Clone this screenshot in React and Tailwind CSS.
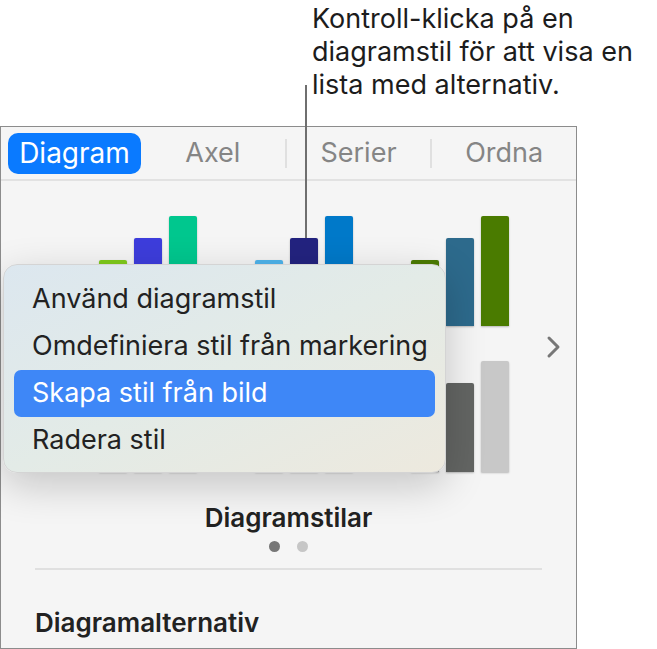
import React from 'react';

const rowOne = [
  [{ h: 66, c: 'bg-[#7fcb1c]' }, { h: 88, c: 'bg-[#3d3ddc]' }, { h: 110, c: 'bg-[#00c78e]' }],
  [{ h: 66, c: 'bg-[#4eb4ec]' }, { h: 88, c: 'bg-[#23237f]' }, { h: 110, c: 'bg-[#0079c9]' }],
  [{ h: 66, c: 'bg-[#4b7b02]' }, { h: 88, c: 'bg-[#2d6a8c]' }, { h: 110, c: 'bg-[#4a7b00]' }],
];

const rowTwo = [
  [{ h: 67, c: 'bg-[#e0b84a]' }, { h: 89, c: 'bg-[#d9784a]' }, { h: 111, c: 'bg-[#c24a4a]' }],
  [{ h: 67, c: 'bg-[#8ab4d8]' }, { h: 89, c: 'bg-[#5a86b8]' }, { h: 111, c: 'bg-[#355e90]' }],
  [{ h: 67, c: 'bg-[#9a9a9a]' }, { h: 89, c: 'bg-[#636563]' }, { h: 111, c: 'bg-[#c8c8c8]' }],
];

const menuItems = ['Använd diagramstil', 'Omdefiniera stil från markering', 'Skapa stil från bild', 'Radera stil'];

const BarRow = ({ groups, height }) => (
  <div className="flex items-end gap-[58px] pl-[98px]" style={{ height }}>
    {groups.map((group, i) => (
      <div key={i} className="flex items-end gap-[7px]">
        {group.map((bar, j) => (
          <div
            key={j}
            className={`w-[28px] rounded-t-[2px] shadow-[0_1px_2px_rgba(0,0,0,0.25)] ${bar.c}`}
            style={{ height: bar.h }}
          />
        ))}
      </div>
    ))}
  </div>
);

export default function App() {
  return (
    <div className="relative w-[657px] h-[649px] bg-white font-['Inter',sans-serif] overflow-hidden">
      {/* callout */}
      <div className="h-[126px] pl-[312px] pt-[2px] text-[27px] leading-[33px] text-[#1c1c1c]">
        Kontroll-klicka på en
        <br />
        diagramstil för att visa en
        <br />
        lista med alternativ.
      </div>

      {/* inspector panel */}
      <div className="w-[577px] h-[523px] border border-[#8c8c8c] bg-[#f5f5f5]">
        <div className="h-[54px] flex items-center pl-[7px] border-b-2 border-[#e2e2e2]">
          <div className="w-[133px] h-[41px] rounded-[10px] bg-[#0a7aff] text-white text-[28px] flex items-center justify-center">
            Diagram
          </div>
          <div className="flex-1 text-center text-[27px] text-[#858585]">Axel</div>
          <div className="w-[2px] h-[29px] bg-[#e0e0e0]" />
          <div className="flex-1 text-center text-[27px] text-[#858585]">Serier</div>
          <div className="w-[2px] h-[29px] bg-[#e0e0e0]" />
          <div className="flex-1 text-center text-[27px] text-[#858585]">Ordna</div>
        </div>

        <div className="flex items-center mt-[35px]">
          <div className="flex flex-col gap-[35px] w-[509px]">
            <BarRow groups={rowOne} height={110} />
            <BarRow groups={rowTwo} height={111} />
          </div>
          <svg className="ml-[36px] mt-[6px]" width="16" height="24" viewBox="0 0 16 24" fill="none">
            <path d="M3 3l9 9-9 9" stroke="#777" strokeWidth="3" strokeLinecap="round" strokeLinejoin="round" />
          </svg>
        </div>

        <div className="mt-[31px] text-center text-[26px] leading-[30px] font-semibold text-[#222]">Diagramstilar</div>
        <div className="flex justify-center gap-[17px] mt-[8px]">
          <div className="w-[11px] h-[11px] rounded-full bg-[#777]" />
          <div className="w-[11px] h-[11px] rounded-full bg-[#c6c6c6]" />
        </div>
        <div className="mx-[34px] mt-[16px] h-[2px] bg-[#e0e0e0]" />
        <div className="mt-[38px] pl-[34px] text-[26px] leading-[30px] font-semibold text-[#222]">Diagramalternativ</div>
      </div>

      {/* leader line */}
      <div className="absolute left-[305px] top-[85px] w-[2px] h-[153px] bg-[#6f6f6f]" />

      {/* context menu */}
      <div className="absolute left-[3px] top-[264px] w-[443px] h-[209px] rounded-[14px] border border-[#d4d4d4] bg-linear-to-br from-[#dce7ef] via-[#e3ebe7] to-[#ede9de] shadow-[0_12px_40px_rgba(0,0,0,0.2)] pt-[11px] px-[10px]">
        {menuItems.map((item, i) => (
          <div
            key={i}
            className={`h-[47px] flex items-center pl-[18px] rounded-[7px] text-[27px] ${
              i === 2 ? 'bg-[#3e87f7] text-white' : 'text-[#222]'
            }`}
          >
            {item}
          </div>
        ))}
      </div>
    </div>
  );
}
